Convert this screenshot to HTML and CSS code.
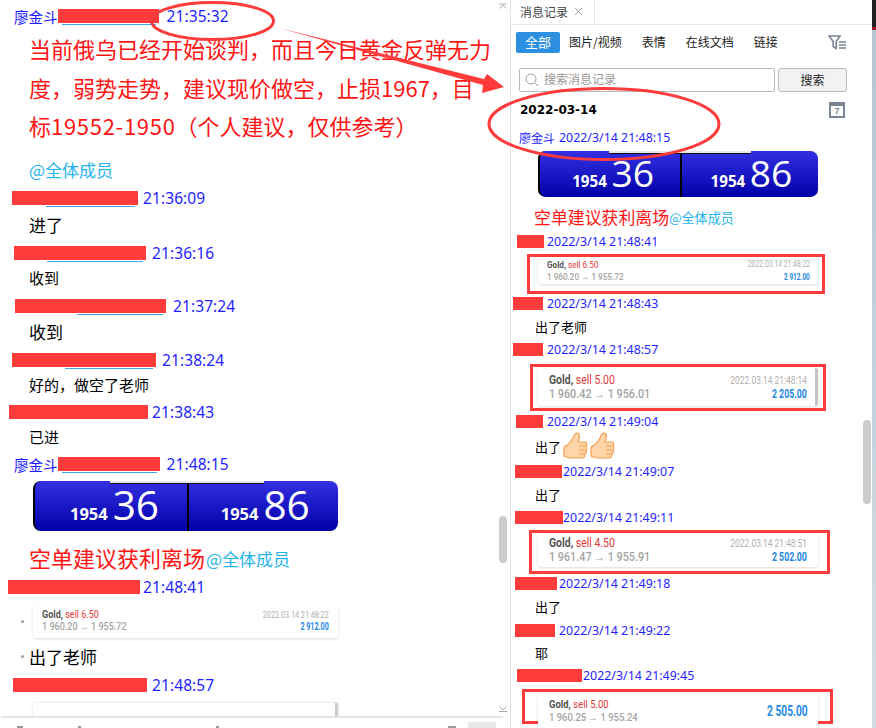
FILE: index.html
```html
<!DOCTYPE html>
<html lang="zh">
<head>
<meta charset="utf-8">
<title>消息记录</title>
<link rel="stylesheet" href="styles.css">
</head>
<body>
<div class="app">
  <main class="chat">
    <div class="chat-scroll">
      <div class="meta h24 mt4"><span class="who pl14">廖金斗</span><span class="red w101 under u4"></span><span class="time ml8">21:35:32</span></div>
      <p class="call">当前俄乌已经开始谈判，而且今日黄金反弹无力<br>度，弱势走势，建议现价做空，止损1967，目<br>标<span class="nums">19552-1950</span>（个人建议，仅供参考）</p>
      <div class="text h26 mt10 at">@全体成员</div>

      <div class="meta h24 mt2"><span class="red w126 pl12m under u27"></span><span class="time ml5">21:36:09</span></div>
      <div class="text h32 s17">进了</div>
      <div class="meta h22"><span class="red w132 pl14m under u25"></span><span class="time ml6">21:36:16</span></div>
      <div class="text h30 s15">收到</div>
      <div class="meta h24"><span class="red w151 pl15m under u41"></span><span class="time ml7">21:37:24</span></div>
      <div class="text h30 s17">收到</div>
      <div class="meta h24"><span class="red w144 pl12m under u37"></span><span class="time ml6">21:38:24</span></div>
      <div class="text h28 s15">好的，做空了老师</div>
      <div class="meta h24"><span class="red w139 pl9m"></span><span class="time ml4">21:38:43</span></div>
      <div class="text h28 s15">已进</div>
      <div class="meta h24"><span class="who pl14">廖金斗</span><span class="red w102 under u4"></span><span class="time ml7">21:48:15</span></div>

      <div class="quote q-left">
        <div class="q-notch"></div>
        <div class="q-side"><span class="q-small">1954</span><span class="q-big">36</span></div>
        <div class="q-side"><span class="q-small">1954</span><span class="q-big">86</span></div>
      </div>

      <div class="text h28 mt13 hit"><span class="hit-big">空单建议获利离场</span><span class="at">@全体成员</span></div>
      <div class="meta h24 mt3"><span class="red w132 pl8m"></span><span class="time ml3">21:48:41</span></div>

      <div class="bulleted mt5">
        <span class="dot"></span>
        <div class="card card-l">
          <div class="c-main"><div class="c-t"><b>Gold,</b> <span class="sell">sell 6.50</span></div><div class="c-p">1 960.20 → 1 955.72</div></div>
          <div class="c-side"><div class="c-d">2022.03.14 21:48:22</div><div class="c-a">2 912.00</div></div>
        </div>
      </div>

      <div class="text h26 mt7 s17 tail"><span class="dot dot-text"></span>出了老师</div>
      <div class="meta h24 mt2"><span class="red w134 pl13m"></span><span class="time ml5">21:48:57</span></div>
      <div class="card card-l card-clip mt5"></div>
    </div>
    <div class="chat-tools">
      <i class="tool t1"></i><i class="tool t2"></i><i class="tool t3"></i><i class="tool t4"></i><span class="tool-btn"></span>
    </div>
    <svg class="caret caret-top" viewBox="0 0 10 6" aria-hidden="true"><path d="M1 1h8M1.500 5.500 5 2l3.500 3.500" fill="none" stroke="#aaa"/></svg>
    <svg class="caret caret-bottom" viewBox="0 0 10 6" aria-hidden="true"><path d="M1 5.500h8M1.500.5 5 4 8.500.5" fill="none" stroke="#aaa"/></svg>
    <span class="thumb thumb-left"></span>
  </main>

  <aside class="log">
    <div class="tabs"><div class="tab"><span class="tab-label">消息记录</span><svg class="tab-x" viewBox="0 0 10 10" aria-hidden="true"><path d="M1 1l8 8M9 1l-8 8" stroke="#999" fill="none"/></svg></div></div>
    <nav class="filters">
      <span class="f-item f-on">全部</span>
      <span class="f-item f1">图片/视频</span>
      <span class="f-item f2">表情</span>
      <span class="f-item f2">在线文档</span>
      <span class="f-item f2">链接</span>
      <svg class="f-icon" viewBox="0 0 18 15" aria-hidden="true"><path d="M1 1h11L8.200 6.500V13.500L5.200 11.500V6.500Z" fill="none" stroke="#7b8494" stroke-width="1.600"/><path d="M11 7h7M11 10h7M11 13h7" stroke="#7b8494" stroke-width="1.500"/></svg>
    </nav>
    <div class="search">
      <label class="s-box">
        <svg class="s-icon" viewBox="0 0 14 14" aria-hidden="true"><circle cx="6" cy="6" r="5" fill="none" stroke="#999"/><path d="M9.500 9.500 13 13" stroke="#999"/></svg>
        <span class="s-hint">搜索消息记录</span>
      </label>
      <button class="s-btn">搜索</button>
    </div>
    <div class="date-row"><span class="date">2022-03-14</span><span class="cal">7</span></div>

    <div class="records">
      <div class="meta h24"><span class="who-s pl8">廖金斗</span><span class="stamp ml4">2022/3/14 21:48:15</span></div>
      <div class="quote q-right">
        <div class="q-notch"></div>
        <div class="q-side"><span class="q-small">1954</span><span class="q-big">36</span></div>
        <div class="q-side"><span class="q-small">1954</span><span class="q-big">86</span></div>
      </div>
      <div class="text h26 mt6 hit hit-r"><span class="hit-big">空单建议获利离场</span><span class="at">@全体成员</span></div>
      <div class="meta h22"><span class="red red-s w27 r6"></span><span class="stamp ml3">2022/3/14 21:48:41</span></div>
      <div class="box box1 mt3">
        <div class="card card-s">
          <div class="c-main"><div class="c-t"><b>Gold,</b> <span class="sell">sell 6.50</span></div><div class="c-p">1 960.20 → 1 955.72</div></div>
          <div class="c-side"><div class="c-d">2022.03.14 21:48:22</div><div class="c-a">2 912.00</div></div>
        </div>
      </div>
      <div class="meta h16"><span class="red red-s w30 r2"></span><span class="stamp ml4">2022/3/14 21:48:43</span></div>
      <div class="text h24 mt4 s13 r-text">出了老师</div>
      <div class="meta h20"><span class="red red-s w30 r2"></span><span class="stamp ml4">2022/3/14 21:48:57</span></div>
      <div class="box box2 mt6">
        <div class="card card-m card-bar">
          <div class="c-main"><div class="c-t"><b>Gold,</b> <span class="sell">sell 5.00</span></div><div class="c-p">1 960.42 → 1 956.01</div></div>
          <div class="c-side"><div class="c-d">2022.03.14 21:48:14</div><div class="c-a">2 205.00</div></div>
        </div>
      </div>
      <div class="meta h18"><span class="red red-s w27 r5"></span><span class="stamp ml4">2022/3/14 21:49:04</span></div>
      <div class="text h34 s13 r-text">出了
        <svg class="like" viewBox="0 0 26 28" aria-hidden="true"><path d="M2 15c4-2 7-5 9-9 1-3 2-5 4-5 3 0 3 4 1 9h7c2 0 2 3 1 4 1 1 1 3 0 4 1 1 0 3-1 4 0 2-1 4-3 4H9c-3 0-5-1-7-2Z" fill="#fdd5a8" stroke="#f2a04e" stroke-width="1.200"/><path d="M17 14h6M17 18h6M17 22h5" stroke="#f2a04e"/></svg>
        <svg class="like" viewBox="0 0 26 28" aria-hidden="true"><path d="M2 15c4-2 7-5 9-9 1-3 2-5 4-5 3 0 3 4 1 9h7c2 0 2 3 1 4 1 1 1 3 0 4 1 1 0 3-1 4 0 2-1 4-3 4H9c-3 0-5-1-7-2Z" fill="#fdd5a8" stroke="#f2a04e" stroke-width="1.200"/><path d="M17 14h6M17 18h6M17 22h5" stroke="#f2a04e"/></svg>
      </div>
      <div class="meta h14"><span class="red red-s w47 r4"></span><span class="stamp ml1">2022/3/14 21:49:07</span></div>
      <div class="text h26 mt4 s13 r-text">出了</div>
      <div class="meta h18"><span class="red red-s w48 r4"></span><span class="stamp">2022/3/14 21:49:11</span></div>
      <div class="box box3 mt5">
        <div class="card card-m card-short">
          <div class="c-main"><div class="c-t"><b>Gold,</b> <span class="sell">sell 4.50</span></div><div class="c-p">1 961.47 → 1 955.91</div></div>
          <div class="c-side"><div class="c-d">2022.03.14 21:48:51</div><div class="c-a">2 502.00</div></div>
        </div>
      </div>
      <div class="meta h16"><span class="red red-s w42 r4"></span><span class="stamp ml2">2022/3/14 21:49:18</span></div>
      <div class="text h24 mt4 s13 r-text">出了</div>
      <div class="meta h22"><span class="red red-s w40 r4"></span><span class="stamp ml4">2022/3/14 21:49:22</span></div>
      <div class="text h24 s13 r-text">耶</div>
      <div class="meta h20"><span class="red red-s w65 r6"></span><span class="stamp ml1">2022/3/14 21:49:45</span></div>
      <div class="box box4 mt5">
        <div class="card card-big">
          <div class="c-main"><div class="c-t"><b>Gold,</b> <span class="sell">sell 5.00</span></div><div class="c-p">1 960.25 → 1 955.24</div></div>
          <div class="c-side"><div class="c-a">2 505.00</div></div>
        </div>
      </div>
    </div>
    <span class="thumb thumb-right"></span>
  </aside>
  <div class="edge"></div>

  <svg class="marks" viewBox="0 0 876 728" aria-hidden="true">
    <ellipse cx="212.500" cy="21" rx="61" ry="18.500" fill="none" stroke="#ff3b3b" stroke-width="3"/>
    <ellipse cx="604" cy="124" rx="115" ry="35.500" fill="none" stroke="#ff3b3b" stroke-width="3"/>
    <path d="M279 28 484 79 487 74 504 87 482 93 483 85Z" fill="#ff3b3b"/>
  </svg>
</div>
</body>
</html>
```

FILE: styles.css
```css
* { box-sizing: border-box; }
html, body { margin: 0; padding: 0; background: #fff; }
body { font-family: "Noto Sans", "Noto Sans CJK SC", sans-serif; color: #000; }
p { margin: 0; }

.app { position: relative; display: flex; width: 876px; height: 728px; overflow: hidden; background: #fff; }

/* left conversation */
.chat { position: relative; width: 511px; height: 728px; border-right: 1px solid #e2e2e2; flex: none; }
.chat-scroll { height: 716px; overflow: hidden; }
.chat .text { padding-bottom: 3px; }
.chat-tools { display: flex; height: 12px; margin: 0 7px 0 1px; border-top: 2px solid #e6e6e6; position: relative; }
.tool { display: block; height: 2px; margin-top: 8px; background: #999; }
.t1 { width: 6px; margin-left: 16px; }
.t2 { width: 3px; margin-left: 55px; }
.t3 { width: 3px; margin-left: 135px; }
.t4 { width: 8px; margin-left: 229px; }
.tool-btn { width: 28px; height: 6px; margin: 4px 0 0 12px; background: #e8e8e8; }

.meta { display: flex; align-items: center; white-space: nowrap; }
.records .meta { padding-top: 3px; }
.text { display: flex; align-items: center; padding-left: 29px; white-space: nowrap; font-family: "Noto Sans CJK SC", sans-serif; }
.who { font-size: 14.500px; color: #1a1aff; font-family: "Noto Sans CJK SC", sans-serif; }
.who-s { font-size: 12px; color: #2222ff; font-family: "Noto Sans CJK SC", sans-serif; }
.time { font-size: 15.500px; color: #1f1fff; line-height: 20px; letter-spacing: .1px; }
.stamp { font-size: 12.400px; color: #1f1fff; line-height: 16px; }

.red { position: relative; display: block; height: 14px; background: #ff3b3b; flex: none; }
.red-s { height: 13px; }
.under::after { content: ""; position: absolute; right: 3px; bottom: -2px; height: 1px; background: #3aa8f5; }
.u4::after { left: 4%; }
.u25::after { left: 25%; }
.u27::after { left: 27%; }
.u37::after { left: 37%; }
.u41::after { left: 41%; }

.call { margin: 1px 0 0; padding: 0 0 0 29px; white-space: nowrap; font: 22px/38.500px "Noto Sans CJK SC", sans-serif; color: #ff1414; }
.nums { letter-spacing: .7px; }
.at { font-size: 17px; color: #26b4ee; }
.hit { color: #ff1414; }
.hit-big { font-size: 22px; }
.hit .at { margin: 3px 0 0 1px; }
.hit-r { padding-left: 23px; }
.hit-r .hit-big { font-size: 16.900px; }
.hit-r .at { font-size: 13.100px; margin: 2px 0 0 0; }

.s13 { font-size: 13px; }
.s15 { font-size: 15px; }
.s17 { font-size: 17px; }
.r-text { padding-left: 24px; }

.h14 { height: 14px; } .h16 { height: 16px; } .h18 { height: 18px; } .h20 { height: 20px; }
.h22 { height: 22px; } .h24 { height: 24px; } .h26 { height: 26px; } .h28 { height: 28px; }
.h30 { height: 30px; } .h32 { height: 32px; } .h34 { height: 34px; }
.mt2 { margin-top: 2px; } .mt3 { margin-top: 3px; } .mt4 { margin-top: 4px; } .mt5 { margin-top: 5px; }
.mt6 { margin-top: 6px; } .mt7 { margin-top: 7px; } .mt10 { margin-top: 13.500px; } .mt13 { margin-top: 13px; }
.ml1 { margin-left: 1px; } .ml2 { margin-left: 2px; } .ml3 { margin-left: 3px; } .ml4 { margin-left: 4px; }
.ml5 { margin-left: 5px; } .ml6 { margin-left: 6px; } .ml7 { margin-left: 7px; } .ml8 { margin-left: 8px; }
.pl8 { margin-left: 8px; } .pl14 { margin-left: 14px; }
.pl8m { margin-left: 8px; } .pl9m { margin-left: 9px; } .pl12m { margin-left: 12px; } .pl13m { margin-left: 13px; }
.pl14m { margin-left: 14px; } .pl15m { margin-left: 15px; }
.r2 { margin-left: 2px; } .r4 { margin-left: 4px; } .r5 { margin-left: 5px; } .r6 { margin-left: 6px; }
.w27 { width: 27px; } .w30 { width: 30px; } .w40 { width: 40px; } .w42 { width: 42px; } .w47 { width: 47px; }
.w48 { width: 48px; } .w65 { width: 65px; } .w101 { width: 101px; } .w102 { width: 102px; } .w126 { width: 126px; }
.w132 { width: 132px; } .w134 { width: 134px; } .w139 { width: 139px; } .w144 { width: 144px; } .w151 { width: 151px; }

/* quote picture */
.quote { position: relative; display: flex; border-radius: .8em; border-left: .25em solid #000; background: linear-gradient(#3430e2, #0000a8); font-family: "Open Sans", sans-serif; color: #fff; }
.q-left { width: 305px; height: 50px; margin: 5px 0 0 33px; font-size: 10px; }
.q-right { width: 280px; height: 46px; margin: 3px 0 0 27px; font-size: 9.200px; }
.q-side { flex: 1; display: flex; align-items: baseline; padding: .35em 0 0 3.500em; white-space: nowrap; }
.q-side + .q-side { border-left: .25em solid #000; padding-left: 3.150em; }
.q-small { font-size: 1.650em; font-weight: 700; margin-right: .3em; }
.q-big { font-size: 4.050em; line-height: 1; font-weight: 400; }
.q-notch { position: absolute; top: 0; left: 7.500em; width: 15.400em; height: .3em; background: #e8e8e8; border-bottom: .15em solid #111; }

/* trade card */
.bulleted { display: flex; align-items: center; }
.dot { display: block; width: 3px; height: 3px; border-radius: 50%; background: #999; margin-left: 21px; flex: none; }
.dot-text { margin: 0 5px 0 -8px; }
.tail { padding-left: 29px; }
.bulleted .card { margin-left: 9px; }
.card { display: flex; justify-content: space-between; width: 280px; background: #fff; border-radius: 3px; box-shadow: 0 1px 3px rgba(0,0,0,.14); font-family: Roboto, sans-serif; }
.c-main, .c-side { display: flex; flex-direction: column; justify-content: center; }
.c-side { align-items: flex-end; }
.c-t { color: #555; white-space: nowrap; transform: scaleX(.86); transform-origin: left center; }
.sell { color: #e03838; }
.c-p { color: #a4a4a4; font-weight: 500; white-space: nowrap; transform: scaleX(.86); transform-origin: left center; }
.c-d { color: #b0b0b0; white-space: nowrap; transform: scaleX(.76); transform-origin: right center; }
.c-a { color: #1e88e5; font-weight: 700; white-space: nowrap; transform: scaleX(.68); transform-origin: right center; }

.card-l { width: 305px; height: 34px; padding: 0 9px; font-size: 10.500px; line-height: 12.500px; }
.card-l .c-d { font-size: 9.500px; }
.card-clip { height: 20px; margin-left: 33px; border-top: 1px solid #eee; border-right: 3px solid #ccc; }
.card-s { height: 27px; padding: 0 8px 0 9px; font-size: 9.500px; line-height: 11.500px; }
.card-s .c-d { font-size: 9px; }
.card-m { height: 38px; padding: 0 11px; font-size: 12px; line-height: 14.500px; }
.card-m .c-t { transform: scaleX(.87); }
.card-m .c-p { transform: scaleX(.9); }
.card-m .c-d { font-size: 11.500px; transform: scaleX(.73); }
.card-m .c-a { transform: scaleX(.73); }
.card-bar { border-right: 3px solid #c4c4c4; padding-right: 8px; }
.card-short { height: 34px; }
.card-big { height: 38px; padding: 0 10px 0 11px; font-size: 11px; line-height: 13px; }
.card-big .c-a { font-size: 15px; }

.box { border: 3px solid #ff3b3b; }
.box1 { width: 298px; height: 40px; margin-left: 16px; padding: 0 0 0 8px; }
.box2 { width: 296px; height: 47px; margin-left: 19px; padding: 1px 0 0 5px; }
.box3 { width: 301px; height: 44px; margin-left: 18px; padding: 0 0 0 6px; }
.box4 { width: 311px; height: 35px; margin-left: 11px; padding: 0 0 0 13px; }

/* right log */
.log { position: relative; flex: none; width: 361px; height: 728px; overflow: hidden; }
.tabs { height: 25px; border-bottom: 1px solid #e6e6e6; }
.tab { display: flex; align-items: center; gap: 6px; width: 84px; height: 24px; padding-left: 9px; border-right: 1px solid #e6e6e6; font: 12px "Noto Sans CJK SC", sans-serif; color: #444; }
.tab-label { margin-top: -2px; }
.tab-x { width: 9px; height: 9px; margin-top: -1px; }
.filters { display: flex; align-items: center; height: 22px; margin-top: 6px; padding-left: 5px; font: 12px "Noto Sans CJK SC", sans-serif; color: #222; }
.f-item { white-space: nowrap; margin-top: -2px; }
.f-on { width: 44px; height: 21px; margin-top: 0; line-height: 19px; text-align: center; background: #2d8fe0; color: #fff; border-radius: 2px; font-size: 13px; }
.f1 { margin-left: 9px; }
.f2 { margin-left: 20px; }
.f-icon { width: 18px; height: 15px; margin-left: 50px; }
.search { display: flex; gap: 3px; height: 24px; margin: 15px 0 0 8px; }
.s-box { display: flex; align-items: center; width: 256px; border: 1px solid #bbb; border-radius: 2px; padding-left: 5px; }
.s-icon { width: 14px; height: 14px; }
.s-hint { margin: -3px 0 0 5px; font: 12px "Noto Sans CJK SC", sans-serif; color: #999; }
.s-btn { width: 69px; padding: 0 0 2px; background: #f2f2f2; border: 1px solid #bbb; border-radius: 3px; font: 12px "Noto Sans CJK SC", sans-serif; color: #222; }
.date-row { display: flex; align-items: center; justify-content: space-between; width: 325px; height: 18px; margin: 9px 0 0 9px; }
.date { font: 700 12px "DejaVu Sans", sans-serif; color: #000; }
.cal { width: 16px; height: 16px; border: 2px solid #7b8494; border-top-width: 4px; font: 700 9px/10px "Liberation Sans", sans-serif; color: #7b8494; text-align: center; }
.records { margin-top: 5px; }
.like { width: 26px; height: 28px; margin-left: 1px; flex: none; }

/* overlays */
.caret { position: absolute; width: 10px; height: 6px; }
.caret-top { top: 3px; left: 498px; }
.caret-bottom { top: 706px; left: 498px; }
.thumb { position: absolute; width: 8px; background: #ccc; border-radius: 4px; }
.thumb-left { left: 499px; top: 516px; height: 47px; }
.thumb-right { left: 352px; top: 420px; height: 84px; }
.edge { flex: none; width: 4px; height: 728px; background: linear-gradient(#222 0 27px, #a01828 27px 30px, #b6c6d2 30px, #d4dde4); }
.marks { position: absolute; inset: 0; width: 876px; height: 728px; pointer-events: none; }
```
